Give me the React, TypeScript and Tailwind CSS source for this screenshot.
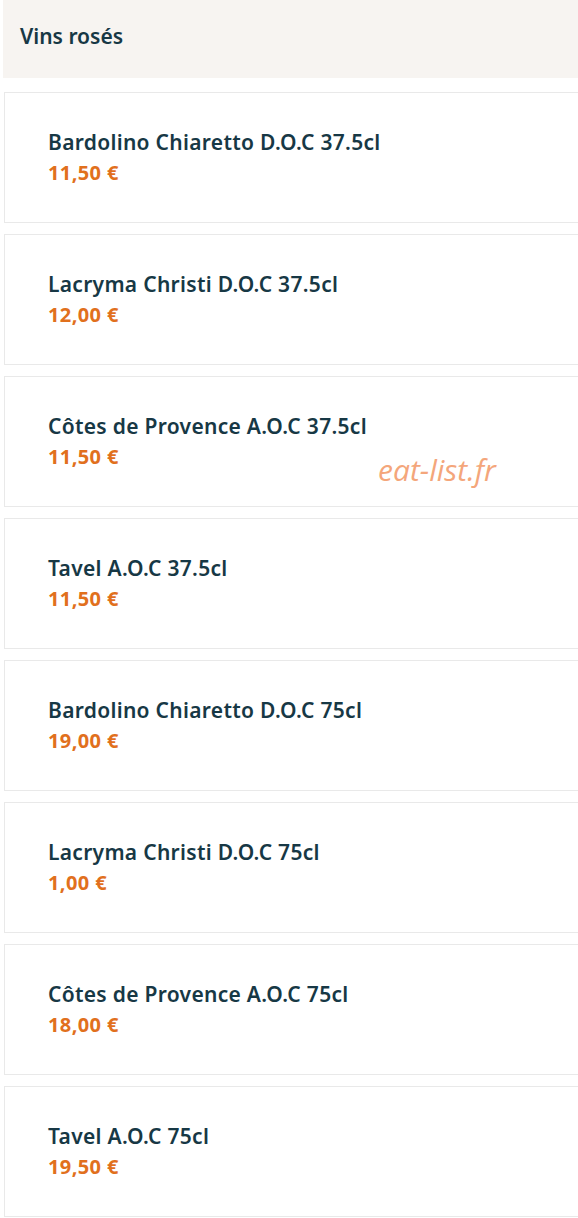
import React from 'react';

type Wine = { name: string; price: string };

const wines: Wine[] = [
  { name: 'Bardolino Chiaretto D.O.C 37.5cl', price: '11,50 €' },
  { name: 'Lacryma Christi D.O.C 37.5cl', price: '12,00 €' },
  { name: 'Côtes de Provence A.O.C 37.5cl', price: '11,50 €' },
  { name: 'Tavel A.O.C 37.5cl', price: '11,50 €' },
  { name: 'Bardolino Chiaretto D.O.C 75cl', price: '19,00 €' },
  { name: 'Lacryma Christi D.O.C 75cl', price: '1,00 €' },
  { name: 'Côtes de Provence A.O.C 75cl', price: '18,00 €' },
  { name: 'Tavel A.O.C 75cl', price: '19,50 €' },
];

const WineCard: React.FC<{ wine: Wine }> = ({ wine }) => (
  <div className="h-[131px] border border-r-0 border-[#e9e9e9] bg-white flex flex-col justify-center pl-[43px] pb-[1px]">
    <p className="text-[21px] leading-[28px] font-semibold text-[#173845] tracking-[0.3px]">{wine.name}</p>
    <p className="mt-[4px] text-[20px] leading-[26px] font-bold text-[#e1701d] tracking-[0.4px]">{wine.price}</p>
  </div>
);

const App: React.FC = () => {
  return (
    <div className="relative w-[578px] bg-white pl-[3px]" style={{ fontFamily: '"Noto Sans", sans-serif' }}>
      <div className="h-[78px] bg-[#f7f4f1] flex items-center pl-[17px] pb-[4px]">
        <h2 className="text-[21px] font-semibold text-[#173845]">Vins rosés</h2>
      </div>
      <div className="pt-[14px] pl-[1px] flex flex-col gap-[11px]">
        {wines.map((w, i) => (
          <WineCard key={i} wine={w} />
        ))}
      </div>
      <div
        className="absolute left-[378px] top-[447px] text-[30px] italic text-[#f4a67b] pointer-events-none"
        style={{ fontFamily: '"Open Sans", sans-serif' }}
      >
        eat-list.fr
      </div>
    </div>
  );
};

export default App;
